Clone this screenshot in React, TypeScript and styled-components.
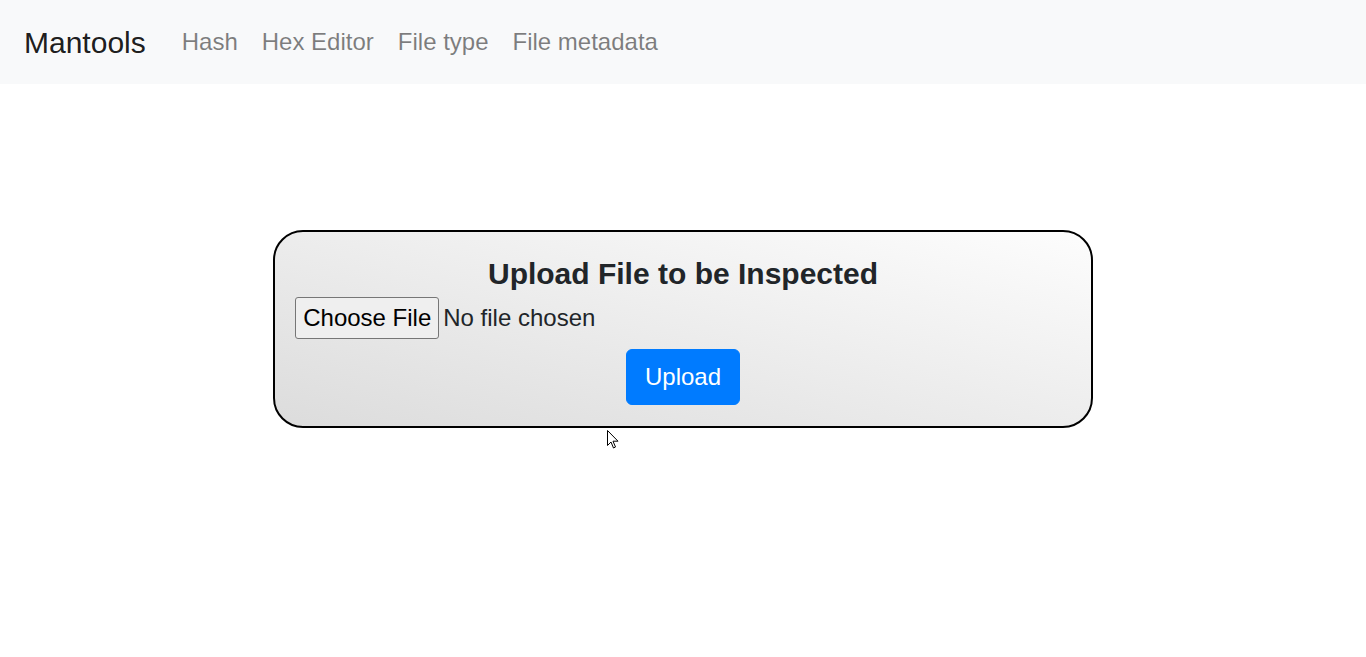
import React from "react";
import styled, { createGlobalStyle } from "styled-components";

const GlobalCss = createGlobalStyle`
    body{
        margin:0;
        background:#fff;
        font-family:"Liberation Sans", Arial, sans-serif;
        color:#212529;
    }
`

const NavBar = styled.nav`
    display:flex;
    align-items:center;
    height:84px;
    padding:12px 24px;
    box-sizing:border-box;
    background:#f8f9fa;
    .brand{
        font-size:30px;
        line-height:45px;
        color:rgba(0,0,0,.9);
        margin-right:24px;
        text-decoration:none;
    }
    ul{
        display:flex;
        list-style:none;
        margin:0;
        padding:0;
    }
`

const NavLink = styled.a`
    display:block;
    padding:12px;
    font-size:24px;
    line-height:36px;
    color:rgba(0,0,0,.5);
    text-decoration:none;
`

const Main = styled.main`
    display:flex;
    justify-content:center;
    padding-top:146px;
`

const UploadCard = styled.form`
    width:60%;
    box-sizing:border-box;
    padding:24px 20px 21px;
    border:2px solid #000;
    border-radius:30px;
    background:linear-gradient(to top right, #dcdcdc, #fdfdfd);
    h4{
        margin:0 0 5px;
        text-align:center;
        font-size:30px;
        line-height:36px;
        font-weight:bold;
        color:#212529;
    }
    .actions{
        display:flex;
        justify-content:center;
        margin-top:10px;
    }
`

const FileInput = styled.input`
    display:block;
    font-family:"Liberation Sans", Arial, sans-serif;
    font-size:24px;
    color:#212529;
    height:42px;
    &::file-selector-button{
        height:42px;
        margin-right:4px;
        padding:0 7px;
        font-family:"Liberation Sans", Arial, sans-serif;
        font-size:24px;
        color:#000;
        background:#efefef;
        border:1px solid #767676;
        border-radius:3px;
    }
`

const UploadButton = styled.button`
    padding:9px 18px;
    font-family:"Liberation Sans", Arial, sans-serif;
    font-size:24px;
    line-height:36px;
    color:#fff;
    background:#007bff;
    border:1px solid #007bff;
    border-radius:6px;
`

const Pointer = styled.svg`
    position:absolute;
    left:607px;
    top:430px;
    pointer-events:none;
`

const links = ['Hash', 'Hex Editor', 'File type', 'File metadata']

const App: React.FC = () => {
    return <>
        <GlobalCss />
        <NavBar>
            <a className="brand" href="#">Mantools</a>
            <ul>
                {links.map(l => <li key={l}><NavLink href="#">{l}</NavLink></li>)}
            </ul>
        </NavBar>
        <Main>
            <UploadCard onSubmit={e => e.preventDefault()}>
                <h4>Upload File to be Inspected</h4>
                <FileInput type="file" />
                <div className="actions">
                    <UploadButton type="submit">Upload</UploadButton>
                </div>
            </UploadCard>
        </Main>
        <Pointer width="13" height="20" viewBox="0 0 13 20">
            <path d="M0.5 0.5 L0.5 15.5 L4 12 L6.5 18 L8.5 17 L6 11.2 L11 11.2 Z" fill="#fff" stroke="#000" strokeWidth="1" />
        </Pointer>
    </>
}

export default App;
